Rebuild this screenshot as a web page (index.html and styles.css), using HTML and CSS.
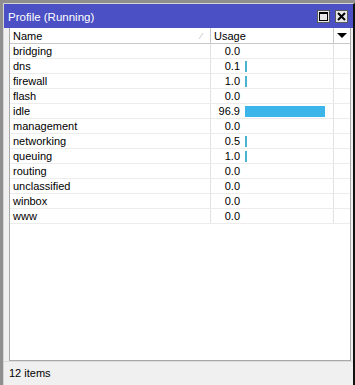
FILE: index.html
```html
<!DOCTYPE html>
<html>
<head>
  <title>Profile (Running)</title>
  <link rel="stylesheet" href="styles.css">
</head>
<body>

<div class="window">
  <!-- title bar -->
  <div class="titlebar">
    <span class="title">Profile (Running)</span>
    <span class="tbtn"><span class="maxbox"></span></span>
    <span class="tbtn">
      <svg width="9" height="9" viewBox="0 0 9 9"><path d="M1 1 L8 8 M8 1 L1 8" stroke="#000" stroke-width="2"/></svg>
    </span>
  </div>

  <div class="content">
    <div class="list">
      <div class="row head">
        <div class="c-name">Name<span class="sort">&#8260;</span></div>
        <div class="c-usage">Usage</div>
        <div class="c-drop"><span class="arrow"></span></div>
      </div>
      <div class="row"><div class="c-name">bridging</div><div class="c-usage"><span class="val">0.0</span></div><div class="c-drop"></div></div>
      <div class="row"><div class="c-name">dns</div><div class="c-usage"><span class="val">0.1</span><span class="bar tick"></span></div><div class="c-drop"></div></div>
      <div class="row"><div class="c-name">firewall</div><div class="c-usage"><span class="val">1.0</span><span class="bar tick"></span></div><div class="c-drop"></div></div>
      <div class="row"><div class="c-name">flash</div><div class="c-usage"><span class="val">0.0</span></div><div class="c-drop"></div></div>
      <div class="row"><div class="c-name">idle</div><div class="c-usage"><span class="val">96.9</span><span class="bar" style="width:80px"></span></div><div class="c-drop"></div></div>
      <div class="row"><div class="c-name">management</div><div class="c-usage"><span class="val">0.0</span></div><div class="c-drop"></div></div>
      <div class="row"><div class="c-name">networking</div><div class="c-usage"><span class="val">0.5</span><span class="bar tick"></span></div><div class="c-drop"></div></div>
      <div class="row"><div class="c-name">queuing</div><div class="c-usage"><span class="val">1.0</span><span class="bar tick"></span></div><div class="c-drop"></div></div>
      <div class="row"><div class="c-name">routing</div><div class="c-usage"><span class="val">0.0</span></div><div class="c-drop"></div></div>
      <div class="row"><div class="c-name">unclassified</div><div class="c-usage"><span class="val">0.0</span></div><div class="c-drop"></div></div>
      <div class="row"><div class="c-name">winbox</div><div class="c-usage"><span class="val">0.0</span></div><div class="c-drop"></div></div>
      <div class="row"><div class="c-name">www</div><div class="c-usage"><span class="val">0.0</span></div><div class="c-drop"></div></div>
      <div class="fill"></div>
    </div>
  </div>

  <div class="status">12 items</div>
</div>

</body>
</html>
```

FILE: styles.css
```css
html, body {
  margin: 0;
  padding: 0;
  height: 100%;
}

body {
  background: #8f8f8f;
  font-family: "Liberation Sans", Arial, sans-serif;
  font-size: 11px;
  color: #000;
  padding: 3px 0 0 3px;
  box-sizing: border-box;
  overflow: hidden;
}

.window {
  width: 349px;
  height: 390px;
  background: #f0f0f0;
  border-left: 1px solid #d4d4d4;
  border-top: 1px solid #d4d4d4;
  border-right: 2px solid #111;
  display: flex;
  flex-direction: column;
}

.titlebar {
  height: 24px;
  background: #4b50c4;
  display: flex;
  align-items: center;
  padding: 0 5px 0 4px;
  gap: 5px;
}

.title {
  color: #fff;
  font-size: 11.5px;
  flex: 1;
  padding-top: 1px;
}

.tbtn {
  width: 11px;
  height: 11px;
  background: #e8e8e8;
  border: 1px solid #5a5a5a;
  display: flex;
  align-items: center;
  justify-content: center;
}

.maxbox {
  width: 7px;
  height: 6px;
  border: 1px solid #000;
  border-top-width: 2px;
}

.content {
  display: flex;
  padding: 0 2px 0 5px;
}

.list {
  flex: 1;
  background: #fff;
  border: 1px solid #a9a9a9;
  border-top: 0;
  display: flex;
  flex-direction: column;
  height: 333px;
  box-sizing: border-box;
}

.row {
  display: flex;
  height: 15px;
  line-height: 15px;
  border-bottom: 1px solid #ececec;
  box-sizing: border-box;
}

.row.head {
  height: 16px;
  line-height: 16px;
  border-bottom: 1px solid #c8c8c8;
}

.c-name {
  width: 197px;
  padding-left: 3px;
  border-right: 1px solid #e2e2e2;
  position: relative;
}

.head .c-name,
.head .c-usage {
  border-right-color: #c8c8c8;
}

.sort {
  position: absolute;
  right: 8px;
  top: 0;
  color: #bbb;
  font-size: 9px;
}

.c-usage {
  width: 122px;
  display: flex;
  align-items: center;
  border-right: 1px solid #e2e2e2;
}

.head .c-usage {
  padding-left: 3px;
  width: 119px;
}

.val {
  width: 29px;
  text-align: right;
}

.bar {
  height: 11px;
  margin-left: 5px;
  background: #3bb5ea;
}

.bar.tick {
  width: 2px;
  background: #4ab3cf;
}

.c-drop {
  flex: 1;
  display: flex;
  align-items: center;
  justify-content: center;
}

.arrow {
  width: 0;
  height: 0;
  border-left: 5px solid transparent;
  border-right: 5px solid transparent;
  border-top: 5px solid #000;
}

.fill {
  flex: 1;
  display: flex;
}

.status {
  flex: 1;
  padding: 5px 0 0 5px;
  border-top: 1px solid #dcdcdc;
}
```
